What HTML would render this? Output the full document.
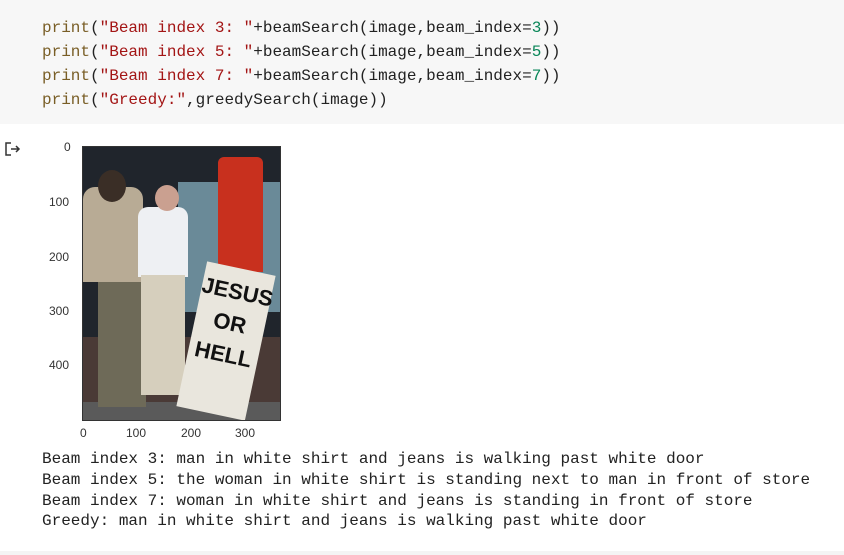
<!DOCTYPE html>
<html><head><style>
body{margin:0;width:844px;height:555px;background:#fff;position:relative;overflow:hidden;font-family:"Liberation Mono",monospace}
.code{position:absolute;left:0;top:0;width:844px;height:124px;background:#f7f7f7}
.cl{position:absolute;left:42px;font-size:16px;color:#222;white-space:pre;line-height:24px}
.f{color:#795e26}.s{color:#a31515}.n{color:#098658}
.out{position:absolute;left:42px;top:449px;font-size:16px;line-height:20.8px;color:#222;white-space:pre}
.t{position:absolute;font-family:"Liberation Sans",sans-serif;font-size:12px;color:#333}
.img{position:absolute;left:83px;top:147px;width:197px;height:273px;overflow:hidden;background:#1c1c20;outline:1px solid #333}
.img div{position:absolute}
</style></head><body>
<div class="code">
<div class="cl" style="top:16px"><span class="f">print</span>(<span class="s">"Beam index 3: "</span>+beamSearch(image,beam_index=<span class="n">3</span>))</div>
<div class="cl" style="top:40px"><span class="f">print</span>(<span class="s">"Beam index 5: "</span>+beamSearch(image,beam_index=<span class="n">5</span>))</div>
<div class="cl" style="top:64px"><span class="f">print</span>(<span class="s">"Beam index 7: "</span>+beamSearch(image,beam_index=<span class="n">7</span>))</div>
<div class="cl" style="top:88px"><span class="f">print</span>(<span class="s">"Greedy:"</span>,greedySearch(image))</div>
</div>
<svg style="position:absolute;left:4px;top:141px" width="18" height="16"><path d="M7 2H2V14H7M7 8H15M12 5L15 8L12 11" fill="none" stroke="#333" stroke-width="1.5"/></svg>
<div class="img">
<div style="left:0;top:0;width:197px;height:190px;background:#20252c"></div>
<div style="left:95px;top:35px;width:102px;height:130px;background:#6a8a98"></div>
<div style="left:0;top:190px;width:197px;height:83px;background:#4a3a36"></div>
<div style="left:0;top:255px;width:197px;height:18px;background:#5a5a5a"></div>
<div style="left:135px;top:10px;width:45px;height:115px;background:#c8301e;border-radius:6px 6px 0 0"></div>
<div style="left:0;top:40px;width:60px;height:95px;background:#b8ab95;border-radius:12px 12px 0 0"></div>
<div style="left:15px;top:23px;width:28px;height:32px;background:#3a2e26;border-radius:50%"></div>
<div style="left:15px;top:135px;width:48px;height:125px;background:#6e6a58"></div>
<div style="left:55px;top:60px;width:50px;height:70px;background:#eef0f3;border-radius:10px 10px 0 0"></div>
<div style="left:72px;top:38px;width:24px;height:26px;background:#caa090;border-radius:50%"></div>
<div style="left:58px;top:128px;width:44px;height:120px;background:#d6cfbd"></div>
<div style="left:108px;top:120px;width:70px;height:140px;background:#e9e6dd;transform:rotate(12deg);font:bold 22px 'Liberation Sans Narrow','Liberation Sans',sans-serif;color:#111;text-align:center;line-height:32px;padding-top:8px">JESUS<br>OR<br>HELL</div>
</div>
<div class="t" style="left:64px;top:140px">0</div>
<div class="t" style="left:49px;top:195px">100</div>
<div class="t" style="left:49px;top:250px">200</div>
<div class="t" style="left:49px;top:304px">300</div>
<div class="t" style="left:49px;top:358px">400</div>
<div class="t" style="left:80px;top:426px">0</div>
<div class="t" style="left:126px;top:426px">100</div>
<div class="t" style="left:181px;top:426px">200</div>
<div class="t" style="left:235px;top:426px">300</div>
<div class="out">Beam index 3: man in white shirt and jeans is walking past white door
Beam index 5: the woman in white shirt is standing next to man in front of store
Beam index 7: woman in white shirt and jeans is standing in front of store
Greedy: man in white shirt and jeans is walking past white door</div>
<div style="position:absolute;left:0;top:551px;width:844px;height:4px;background:#f4f4f4"></div>
</body></html>
